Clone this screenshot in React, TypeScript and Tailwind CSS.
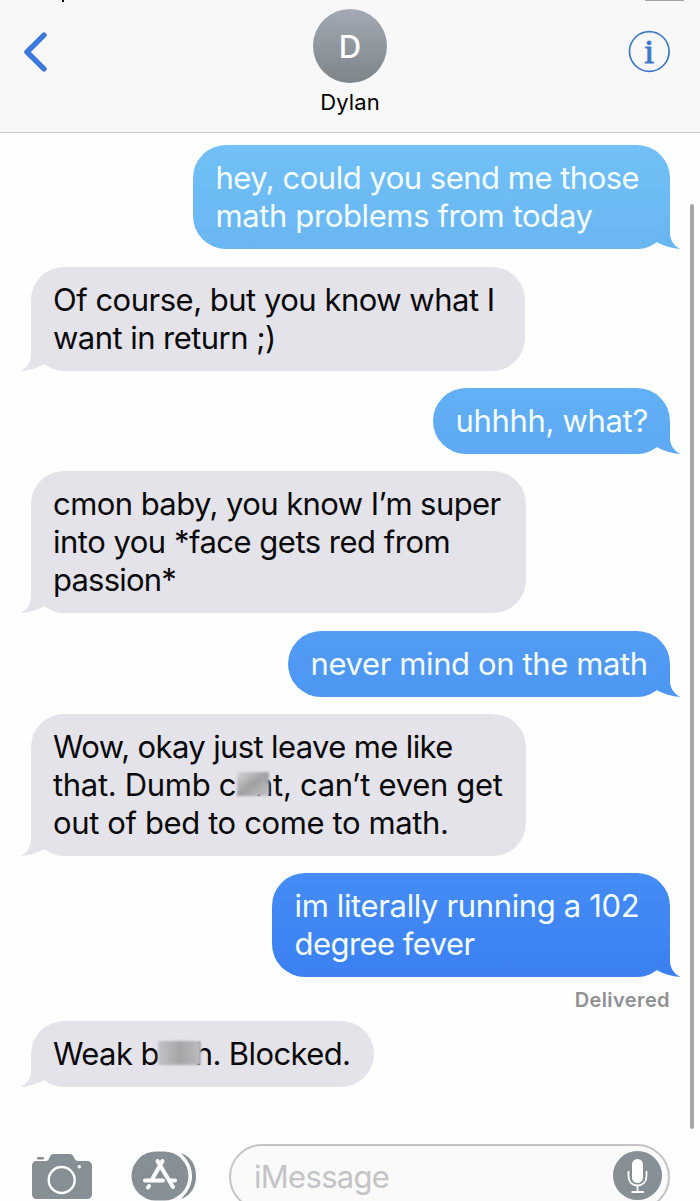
import { ReactNode } from 'react'

interface Line {
  content: ReactNode
  tracking: string
}

interface Message {
  id: number
  mine: boolean
  width: string
  gap: string
  color: string
  tail: string
  lines: Line[]
  status?: string
}

// Blurred patch that hides part of a word
function Smudge({ className }: { className: string }) {
  return (
    <span className={`relative z-10 inline-block align-baseline blur-[0.8px] ${className}`} />
  )
}

const MESSAGES: Message[] = [
  {
    id: 1,
    mine: true,
    width: 'w-[477px]',
    gap: '',
    color: 'bg-linear-to-b from-[#72c0f7] to-[#69b6f1]',
    tail: 'text-[#69b6f1]',
    lines: [
      { content: 'hey, could you send me those', tracking: 'tracking-[-0.5px]' },
      { content: 'math problems from today', tracking: 'tracking-[-0.38px]' },
    ],
  },
  {
    id: 2,
    mine: false,
    width: 'w-[494px]',
    gap: 'mt-[17.5px]',
    color: 'bg-[#e4e3e9]',
    tail: 'text-[#e4e3e9]',
    lines: [
      { content: 'Of course, but you know what I', tracking: 'tracking-[-0.5px]' },
      { content: 'want in return ;)', tracking: 'tracking-[-0.55px]' },
    ],
  },
  {
    id: 3,
    mine: true,
    width: 'w-[237px]',
    gap: 'mt-[17.5px]',
    color: 'bg-linear-to-b from-[#62b0f5] to-[#5da9f3]',
    tail: 'text-[#5da9f3]',
    lines: [{ content: 'uhhhh, what?', tracking: 'tracking-[-0.33px]' }],
  },
  {
    id: 4,
    mine: false,
    width: 'w-[495px]',
    gap: 'mt-[17px]',
    color: 'bg-[#e4e3e9]',
    tail: 'text-[#e4e3e9]',
    lines: [
      { content: 'cmon baby, you know I’m super', tracking: 'tracking-[-0.57px]' },
      { content: 'into you *face gets red from', tracking: 'tracking-[-0.5px]' },
      { content: 'passion*', tracking: 'tracking-[-0.8px]' },
    ],
  },
  {
    id: 5,
    mine: true,
    width: 'w-[382px]',
    gap: 'mt-[18px]',
    color: 'bg-linear-to-b from-[#529cf4] to-[#4d96f2]',
    tail: 'text-[#4d96f2]',
    lines: [{ content: 'never mind on the math', tracking: 'tracking-[-0.38px]' }],
  },
  {
    id: 6,
    mine: false,
    width: 'w-[495px]',
    gap: 'mt-[17px]',
    color: 'bg-[#e4e3e9]',
    tail: 'text-[#e4e3e9]',
    lines: [
      { content: 'Wow, okay just leave me like', tracking: 'tracking-[-0.63px]' },
      {
        content: (
          <>
            that. Dumb c
            <Smudge className="-mr-[14px] ml-[1px] h-[24px] w-[32px] bg-linear-to-br from-[#d8d8dc] via-[#a0a0a2] to-[#c4c4c8]" />
            nt, can’t even get
          </>
        ),
        tracking: 'tracking-[-0.32px]',
      },
      { content: 'out of bed to come to math.', tracking: 'tracking-[-0.38px]' },
    ],
  },
  {
    id: 7,
    mine: true,
    width: 'w-[398px]',
    gap: 'mt-[17px]',
    color: 'bg-linear-to-b from-[#458cf5] to-[#3c80f2]',
    tail: 'text-[#3c80f2]',
    lines: [
      { content: 'im literally running a 102', tracking: 'tracking-[-0.36px]' },
      { content: 'degree fever', tracking: 'tracking-[-0.55px]' },
    ],
    status: 'Delivered',
  },
  {
    id: 8,
    mine: false,
    width: 'w-[343px]',
    gap: 'mt-[8px]',
    color: 'bg-[#e4e3e9]',
    tail: 'text-[#e4e3e9]',
    lines: [
      {
        content: (
          <>
            Weak b
            <Smudge className="-mr-[6px] -ml-[1px] h-[24px] w-[43px] bg-linear-to-r from-[#c4c4c8] via-[#a5a5a8] to-[#bcbcbf]" />
            h. Blocked.
          </>
        ),
        tracking: 'tracking-[-0.62px]',
      },
    ],
  },
]

function Tail({ mine, className }: { mine: boolean; className: string }) {
  return (
    <svg
      viewBox="0 0 30 34"
      className={`absolute bottom-0 h-[34px] w-[30px] ${mine ? '-right-[11px]' : '-left-[11px] -scale-x-100'} ${className}`}
      fill="currentColor"
    >
      <path d="M19 1V18C19 24.500 22.500 30.500 29.300 34C21 33.300 12.500 31 6 27.300Z" />
    </svg>
  )
}

function Bubble({ message }: { message: Message }) {
  const { mine, width, color, tail, lines } = message
  return (
    <div
      className={`relative rounded-[33px] py-[14px] text-[31px] leading-[38px] whitespace-nowrap ${width} ${color} ${
        mine ? 'self-end pl-[22.5px] text-[#f4fdff]' : 'self-start pl-[22px] text-[#0a0a0c]'
      }`}
    >
      <Tail mine={mine} className={tail} />
      {lines.map((line, i) => (
        <p key={i} className="relative h-[38px]">
          <span className={line.tracking}>{line.content}</span>
        </p>
      ))}
    </div>
  )
}

function Header() {
  return (
    <header className="relative flex h-[133px] shrink-0 justify-between border-b border-[#c8c8cb] bg-[#f8f8f9]">
      {/* bottom edge of the status bar */}
      <span className="absolute top-0 left-[62px] h-[2px] w-[2px] bg-black" />
      <span className="absolute top-0 left-[645px] h-[1px] w-[39px] bg-[#a5a5a7]" />
      <button className="mt-[31px] ml-[22px] h-[42px] w-[42px]" aria-label="Back">
        <svg viewBox="0 0 42 42" className="h-[42px] w-[42px]" fill="none">
          <path
            d="M22 4.200L5 21L22 37.800"
            stroke="#3d79dc"
            strokeWidth="5.400"
            strokeLinecap="round"
            strokeLinejoin="round"
          />
        </svg>
      </button>
      <div className="flex w-[120px] flex-col items-center pt-[9px]">
        <div className="flex h-[74px] w-[74px] items-center justify-center rounded-full bg-linear-to-b from-[#a3a9b4] to-[#7e8589] pt-[2px] text-[31px] font-medium text-white">
          D
        </div>
        <p className="mt-[4px] text-[22px] leading-[30px] tracking-[0.1px] text-black">Dylan</p>
      </div>
      <button className="mt-[30px] mr-[30px] ml-[-8px] h-[43px] w-[42px]" aria-label="Details">
        <svg viewBox="0 0 42 43" className="h-[43px] w-[42px]">
          <circle cx="21.300" cy="21.500" r="19.800" fill="none" stroke="#3f78cb" strokeWidth="1.700" />
          <text
            x="21.300"
            y="33"
            textAnchor="middle"
            fill="#3f78cb"
            stroke="#3f78cb"
            strokeWidth="1.100"
            className="font-['Liberation_Serif',serif] text-[34px]"
          >
            i
          </text>
        </svg>
      </button>
    </header>
  )
}

function CameraIcon() {
  return (
    <svg viewBox="0 0 62 48" className="h-[48px] w-[62px]">
      <rect x="6" y="5" width="7" height="2.500" rx="0.800" fill="#868f94" />
      <path
        d="M5 9H14C17 9 17.500 8 18.500 5.500C19.500 3 20.500 2 23 2H38C41 2 42 3 43 5.500C44 8 45 9 48 9H56C59 9 61 11 61 14V42C61 45 59 47 56 47H6C3 47 1 45 1 42V14C1 11 2.500 9 5 9Z"
        fill="#868f94"
      />
      <circle cx="30.700" cy="28" r="13" fill="none" stroke="#fff" strokeWidth="2.400" />
      <circle cx="48.300" cy="14.700" r="1.700" fill="#fff" />
    </svg>
  )
}

function AppStoreIcon() {
  return (
    <svg viewBox="0 0 66 50" className="h-[50px] w-[66px]" fill="none">
      <path d="M50 2C61 6 65 15 65 25C65 35 61 44 50 48C57 41 61 34 61 25C61 16 57 9 50 2Z" fill="#868f94" />
      <rect x="0.500" y="0.500" width="57" height="49" rx="24.500" fill="#868f94" />
      <g stroke="#fff" strokeWidth="4" strokeLinecap="round">
        <path d="M26.500 10L42 36M31.500 10L21 28.500M14 29.500H32M39.500 29.500H44M18 35L17 36.500" />
      </g>
    </svg>
  )
}

function Composer() {
  return (
    <footer className="flex h-[72px] shrink-0 items-start pl-[31px]">
      <div className="mt-[15px]">
        <CameraIcon />
      </div>
      <div className="mt-[14px] ml-[38px]">
        <AppStoreIcon />
      </div>
      <div className="mt-[7px] ml-[32px] flex h-[66px] w-[441px] items-start justify-between rounded-full border-2 border-[#c4c4c7] bg-[#fafafa] pr-[6px] pl-[23px]">
        <span className="mt-[12px] text-[31px] leading-[38px] tracking-[-0.7px] text-[#c4c4c7]">iMessage</span>
        <svg viewBox="0 0 49 49" className="mt-[5px] h-[49px] w-[49px]" fill="none">
          <circle cx="24.500" cy="24.500" r="24.500" fill="#868f94" />
          <rect x="19" y="8" width="11" height="24" rx="5.500" fill="#fff" />
          <path
            d="M15.500 20V25C15.500 31 19 34.500 24.500 34.500C30 34.500 33.500 31 33.500 25V20M24.500 35V40.500M18.500 41H31"
            stroke="#fff"
            strokeWidth="1.800"
          />
        </svg>
      </div>
    </footer>
  )
}

export default function App() {
  return (
    <div className="relative flex h-[1201px] w-[700px] flex-col overflow-hidden bg-[#fefefe] font-['Inter','Liberation_Sans',sans-serif]">
      <Header />
      <main className="flex h-[1004px] shrink-0 flex-col pt-[12px] pr-[30px] pl-[31px]">
        {MESSAGES.map(message => (
          <div key={message.id} className={`flex flex-col ${message.gap}`}>
            <Bubble message={message} />
            {message.status && (
              <p className="mt-[10px] h-[26px] self-end text-[20px] leading-[26px] font-semibold tracking-[0.4px] text-[#909093]">
                {message.status}
              </p>
            )}
          </div>
        ))}
      </main>
      <Composer />
      {/* scroll indicator */}
      <div className="absolute top-[204px] left-[690px] h-[925px] w-[4px] rounded-full bg-[#a6a6a6]" />
    </div>
  )
}
